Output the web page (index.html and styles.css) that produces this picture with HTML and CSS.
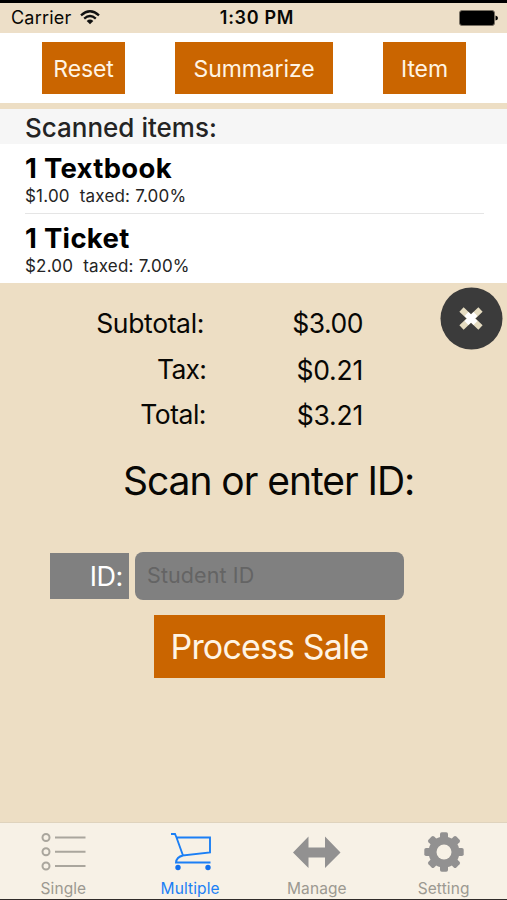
FILE: index.html
```html
<!DOCTYPE html>
<html lang="en">
<head>
<meta charset="utf-8">
<title>Multiple sale</title>
<link rel="stylesheet" href="styles.css">
</head>
<body>
<div class="screen">
  <header class="status">
    <div class="carrier"><span class="carrier-name">Carrier</span>
      <svg class="wifi" width="20" height="15" viewBox="0 0 20 15" fill="none" stroke="#111" stroke-width="2.3"><path d="M1 5.3Q10-2.8 19 5.3M4.2 8.6Q10 3.4 15.8 8.6"/><path d="M6.7 11Q10 8.1 13.3 11L10 14.3Z" fill="#111" stroke="none"/></svg>
    </div>
    <span class="time">1:30 PM</span>
    <svg class="battery" width="39" height="16" viewBox="0 0 39 16"><rect x=".5" y=".5" width="35" height="15" rx="2.5" fill="#000" stroke="#776f62"/><path d="M36.5 5.5Q39 6 39 8T36.5 10.5Z"/></svg>
  </header>
  <nav class="toolbar">
    <button class="btn reset"><span>Reset</span></button>
    <button class="btn summarize"><span>Summarize</span></button>
    <button class="btn item"><span>Item</span></button>
  </nav>
  <section class="list">
    <h2 class="list-title">Scanned items:</h2>
    <article class="row first"><h3>1 Textbook</h3><p>$1.00&nbsp; taxed: 7.00%</p></article>
    <article class="row"><h3>1 Ticket</h3><p>$2.00&nbsp; taxed: 7.00%</p></article>
  </section>
  <main class="sale">
    <button class="close" aria-label="Close"><svg width="64" height="64" viewBox="0 0 64 64"><circle cx="31.500" cy="32.500" r="31" fill="#3b3b3b"/><path d="M21.500 23.500L40.500 41.500M40.500 23.500L21.500 41.500" stroke="#e5dcc1" stroke-width="6.200"/><path d="M26.500 28L35.500 37M35.500 28L26.500 37" stroke="#fff" stroke-width="5.500"/></svg></button>
    <dl class="totals">
      <dt class="subtotal">Subtotal:</dt><dd>$3.00</dd>
      <dt class="tax">Tax:</dt><dd class="ones">$0.21</dd>
      <dt class="total">Total:</dt><dd class="ones">$3.21</dd>
    </dl>
    <h1>Scan or enter ID:</h1>
    <div class="field"><label>ID:</label><div class="input">Student ID</div></div>
    <button class="process"><span>Process Sale</span></button>
  </main>
  <footer class="tabs">
    <div class="tab"><svg width="46" height="40" viewBox="0 0 46 40" fill="none" stroke="#aaa69d" stroke-width="2"><circle cx="6" cy="5.500" r="3.500"/><circle cx="6" cy="19.800" r="3.500"/><circle cx="6" cy="34" r="3.500"/><path d="M15 5.500H45.500M15 19.800H45.500M15 34H45.500"/></svg><span>Single</span></div>
    <div class="tab active"><svg width="46" height="40" viewBox="0 0 46 40" fill="none" stroke="#1b7ff5" stroke-width="1.900"><path d="M4 2H8L9.500 5.500L16 23.500L43 20.500V5.500H9.500M16 23.500Q9.500 25 9 30.500H43.500"/><g fill="#1270ed" stroke="none"><circle cx="11" cy="35.500" r="2.700"/><circle cx="41" cy="35.500" r="2.700"/></g></svg><span>Multiple</span></div>
    <div class="tab"><svg width="48" height="40" viewBox="0 0 48 40" fill="#929191"><path d="M0 20.500L15.500 4.500V15.500H32V4.500L47.500 20.500L32 36V25.500H15.500V36Z"/></svg><span>Manage</span></div>
    <div class="tab"><svg width="40" height="40" viewBox="-20 -20 40 40"><g fill="#929191"><circle r="15.500"/><rect x="-4" y="-19.700" width="8" height="39.400" rx="1.800"/><rect x="-19.700" y="-4" width="39.400" height="8" rx="1.800"/><g transform="rotate(45)"><rect x="-4" y="-19.700" width="8" height="39.400" rx="1.800"/><rect x="-19.700" y="-4" width="39.400" height="8" rx="1.800"/></g></g><circle r="7.500" fill="#f7f1e6"/></svg><span>Setting</span></div>
  </footer>
</div>
</body>
</html>
```
FILE: styles.css
```css
* { box-sizing: border-box; }
body, h1, h2, h3, p, dl, dt, dd { margin: 0; }
body { font-family: Inter, "Liberation Sans", sans-serif; color: #080704; }
button { border: 0; padding: 0; font: inherit; color: inherit; }
.screen { width: 507px; height: 900px; display: flex; flex-direction: column; background: #eddec4; border-top: 3px solid #000; border-bottom: 1px solid #302b29; overflow: hidden; white-space: nowrap; }
.status { height: 30px; display: grid; grid-template-columns: 1fr auto 1fr; align-items: center; padding: 0 9px 0 11px; font-size: 18px; line-height: 30px; background: #eddfc8; }
.carrier { display: flex; align-items: center; gap: 9px; letter-spacing: .2px; }
.wifi { margin-bottom: 2px; }
.time { font-weight: 600; letter-spacing: .7px; margin-left: 5px; }
.battery { justify-self: end; }
.toolbar { height: 70px; background: #fff; display: flex; justify-content: space-between; padding: 9px 41px 0 42px; }
.btn { height: 52px; padding-top: 2px; background: #ca6500; color: #fff4e4; font-size: 23px; letter-spacing: -.1px; }
.reset, .item { width: 83px; }
.summarize { width: 158px; }
.list { margin-top: 6px; flex: none; height: 174px; background: #fff; }
.list-title { height: 35px; padding-left: 25px; background: #f6f6f6; color: #242424; font-size: 26px; line-height: 37px; font-weight: 550; letter-spacing: 0; }
.row { margin: 0 23px 0 25px; height: 70px; padding-top: 7px; }
.row.first { border-bottom: 1px solid #e5e5e5; }
.row h3 { font-size: 27.5px; line-height: 34px; font-weight: 700; letter-spacing: .3px; color: #000; }
.row p { font-size: 17px; line-height: 22px; letter-spacing: .2px; color: #242424; }
.sale { flex: 1; position: relative; }
.close { position: absolute; right: 3px; top: 3px; width: 64px; height: 64px; background: none; }
.close svg { display: block; }
.totals { display: grid; grid-template-columns: 206px 157px; grid-auto-rows: 45.5px; padding-top: 18px; font-size: 26.5px; line-height: 45px; text-align: right; }
.totals dd { letter-spacing: -.5px; }
.totals .ones { letter-spacing: -.2px; line-height: 46px; }
.subtotal { padding-right: 2px; letter-spacing: -.35px; }
.tax { letter-spacing: -.8px; }
.total { letter-spacing: -.5px; }
h1 { margin: 16px 0 0 123px; font-size: 39px; line-height: 54px; font-weight: 400; letter-spacing: -1.05px; }
.field { display: flex; align-items: center; gap: 6px; margin: 44px 0 0 50px; }
.field label { width: 79px; height: 46px; padding-right: 6px; line-height: 47px; text-align: right; background: #808080; color: #fff; font-size: 27px; letter-spacing: -.4px; margin-top: 1px; }
.input { width: 269px; height: 48px; border-radius: 8px; background: #808080; color: #646464; font-size: 21.5px; line-height: 46px; padding-left: 12px; letter-spacing: .1px; }
.process { display: block; width: 231px; height: 63px; margin: 15px 0 0 154px; background: #ca6500; color: #fff4e4; font-size: 34px; letter-spacing: -.85px; }
.tabs { height: 77px; flex: none; display: grid; grid-template-columns: repeat(4, 1fr); background: #f7f1e6; border-top: 1px solid #dfd3bd; color: #9c9991; font-size: 15.5px; letter-spacing: .1px; }
.tab { display: flex; flex-direction: column; align-items: center; padding-top: 9px; }
.tab svg { display: block; flex: none; }
.tab span { line-height: 20px; margin-top: 7px; }
.active { color: #1b7ff5; }
```
